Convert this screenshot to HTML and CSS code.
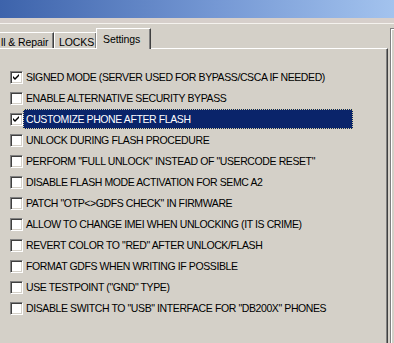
FILE: index.html
```html
<!DOCTYPE html>
<html lang="en">

<head>
    <meta charset="UTF-8" />
    <title>Settings</title>
    <link rel="stylesheet" href="styles.css">
</head>

<body>
    <div class="titlebar"></div>
    <div class="band"></div>

    <div class="window">
        <div class="main">
            <div class="tabs">
                <div class="tab first">ll &amp; Repair</div>
                <div class="tab locks">LOCKS</div>
                <div class="tab active">Settings</div>
            </div>

            <div class="panel">
                <div class="options">
                    <div class="option">
                        <span class="check on"><svg width="7" height="7" viewBox="0 0 7 7"><path d="M0 2 L2 4 L6 0 L6 2 L2 6 L0 4 Z" fill="#000"/></svg></span>
                        <span class="label">SIGNED MODE (SERVER USED FOR BYPASS/CSCA IF NEEDED)</span>
                    </div>
                    <div class="option">
                        <span class="check"></span>
                        <span class="label">ENABLE ALTERNATIVE SECURITY BYPASS</span>
                    </div>
                    <div class="option">
                        <span class="check on"><svg width="7" height="7" viewBox="0 0 7 7"><path d="M0 2 L2 4 L6 0 L6 2 L2 6 L0 4 Z" fill="#000"/></svg></span>
                        <span class="label focused">CUSTOMIZE PHONE AFTER FLASH</span>
                    </div>
                    <div class="option">
                        <span class="check"></span>
                        <span class="label">UNLOCK DURING FLASH PROCEDURE</span>
                    </div>
                    <div class="option">
                        <span class="check"></span>
                        <span class="label">PERFORM "FULL UNLOCK" INSTEAD OF "USERCODE RESET"</span>
                    </div>
                    <div class="option">
                        <span class="check"></span>
                        <span class="label">DISABLE FLASH MODE ACTIVATION FOR SEMC A2</span>
                    </div>
                    <div class="option">
                        <span class="check"></span>
                        <span class="label">PATCH "OTP&lt;&gt;GDFS CHECK" IN FIRMWARE</span>
                    </div>
                    <div class="option">
                        <span class="check"></span>
                        <span class="label">ALLOW TO CHANGE IMEI WHEN UNLOCKING (IT IS CRIME)</span>
                    </div>
                    <div class="option">
                        <span class="check"></span>
                        <span class="label">REVERT COLOR TO "RED" AFTER UNLOCK/FLASH</span>
                    </div>
                    <div class="option">
                        <span class="check"></span>
                        <span class="label">FORMAT GDFS WHEN WRITING IF POSSIBLE</span>
                    </div>
                    <div class="option">
                        <span class="check"></span>
                        <span class="label">USE TESTPOINT ("GND" TYPE)</span>
                    </div>
                    <div class="option">
                        <span class="check"></span>
                        <span class="label">DISABLE SWITCH TO "USB" INTERFACE FOR "DB200X" PHONES</span>
                    </div>
                </div>
            </div>
        </div>

        <div class="side"></div>
    </div>
</body>

</html>
```

FILE: styles.css
```css
html,
body {
    margin: 0;
    padding: 0;
    width: 394px;
    height: 343px;
    overflow: hidden;
    background-color: #d4d0c8;
    font-family: "Liberation Sans", Arial, sans-serif;
    font-size: 10.5px;
    color: #000;
}

.titlebar {
    height: 18px;
    background: linear-gradient(to right, #3d63ab, #7598d4 55%, #a3c3ee);
}

.band {
    height: 5px;
    background-color: #d6cfcb;
    border-bottom: 1px solid #f4f2ee;
}

.window {
    display: flex;
    height: 319px;
}

.main {
    width: 388px;
    display: flex;
    flex-direction: column;
}

.tabs {
    display: flex;
    align-items: flex-end;
    height: 25px;
}

.tab {
    height: 17px;
    box-sizing: border-box;
    border-top: 1px solid #fff;
    border-left: 1px solid #fff;
    border-right: 1px solid #404040;
    box-shadow: inset -1px 0 0 #808080;
    padding: 3px 0 0 4px;
    white-space: nowrap;
    font-size: 10.5px;
    letter-spacing: -0.1px;
}

.tab.first {
    width: 54px;
    border-left: none;
    padding-left: 1px;
}

.tab.locks {
    width: 43px;
}

.tab.active {
    height: 21px;
    width: 55px;
    margin-left: -1px;
    padding: 4px 0 0 6px;
    position: relative;
    z-index: 1;
    background-color: #d4d0c8;
}

.panel {
    flex: 1;
    border-top: 1px solid #fff;
    border-right: 1px solid #404040;
    box-shadow: inset -1px 0 0 #808080;
    margin-top: -1px;
}

.options {
    padding-top: 18px;
    display: flex;
    flex-direction: column;
    gap: 1px;
}

.option {
    display: flex;
    align-items: center;
    height: 20px;
    padding-left: 10px;
}

.check {
    width: 13px;
    height: 13px;
    box-sizing: border-box;
    border: 1px solid;
    border-color: #808080 #fff #fff #808080;
    box-shadow: inset 1px 1px 0 #404040, inset -1px -1px 0 #d4d0c8;
    background-color: #fff;
    display: flex;
    align-items: center;
    justify-content: center;
}

.label {
    width: 330px;
    height: 20px;
    box-sizing: border-box;
    padding: 3px 0 0 2px;
    white-space: nowrap;
    letter-spacing: -0.4px;
    border: 1px solid transparent;
}

.label.focused {
    background-color: #0a246a;
    color: #fff;
    border: 1px dotted #d8d0a0;
}

.side {
    flex: 1;
    border-left: 1px solid #808080;
    margin-left: 2px;
    margin-top: 4px;
    border-top: 1px solid #808080;
    box-shadow: inset 1px 1px 0 #fff;
}
```
